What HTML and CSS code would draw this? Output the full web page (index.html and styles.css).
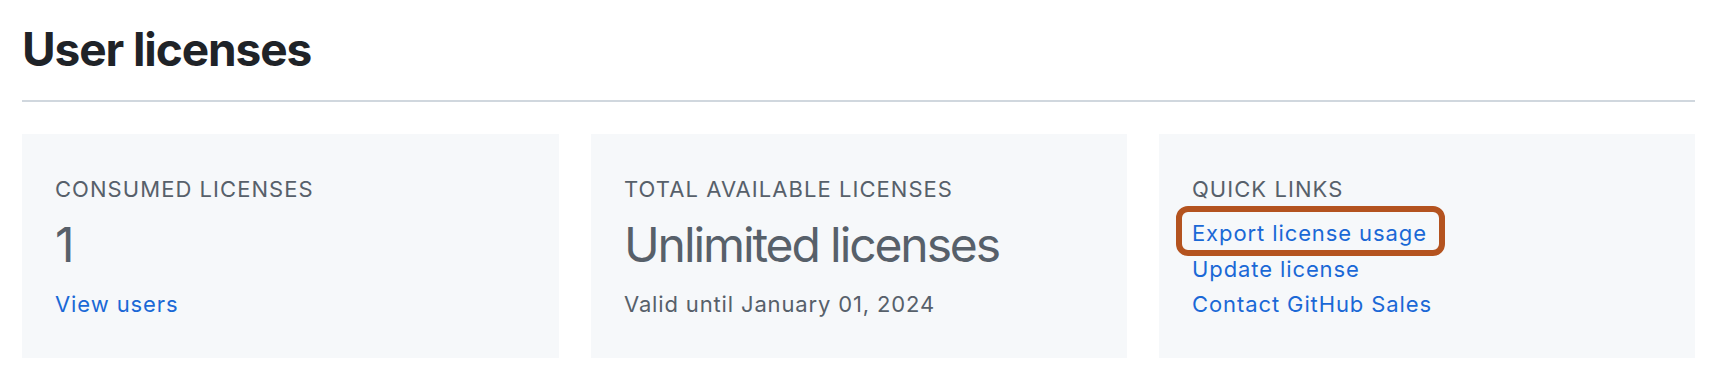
FILE: index.html
```html
<!DOCTYPE html>
<html lang="en">
<head>
<meta charset="utf-8">
<title>User licenses</title>
<link rel="stylesheet" href="styles.css">
</head>
<body>
<main class="page">
  <h1 class="page-title">User licenses</h1>
  <section class="cards">
    <div class="card">
      <div class="card-label">CONSUMED LICENSES</div>
      <div class="card-value">1</div>
      <a class="card-link" href="#">View users</a>
    </div>
    <div class="card">
      <div class="card-label">TOTAL AVAILABLE LICENSES</div>
      <div class="card-value">Unlimited licenses</div>
      <div class="card-note">Valid until January 01, 2024</div>
    </div>
    <div class="card">
      <div class="card-label">QUICK LINKS</div>
      <ul class="quick-links">
        <li><a class="card-link highlighted" href="#">Export license usage</a></li>
        <li><a class="card-link" href="#">Update license</a></li>
        <li><a class="card-link" href="#">Contact GitHub Sales</a></li>
      </ul>
    </div>
  </section>
</main>
</body>
</html>
```

FILE: styles.css
```css
* { box-sizing: border-box; }

html, body {
  margin: 0;
  padding: 0;
  background: #ffffff;
}

body {
  font-family: Inter, "Liberation Sans", Arial, sans-serif;
  color: #1f2328;
}

.page {
  width: 1673px;
  margin-left: 22px;
}

.page-title {
  margin: 0;
  padding: 21px 0 23px;
  font-size: 46px;
  line-height: 56px;
  font-weight: 700;
  letter-spacing: -1.1px;
  color: #1f2328;
  border-bottom: 2px solid #d0d7de;
}

.cards {
  display: grid;
  grid-template-columns: 537px 536px 536px;
  column-gap: 32px;
  margin-top: 32px;
}

.card {
  background: #f6f8fa;
  height: 224px;
  padding: 39px 33px 0;
}

.card-label {
  font-size: 22px;
  line-height: 32px;
  color: #57606a;
  letter-spacing: 1.05px;
}

.card-value {
  margin-top: 11px;
  font-size: 48px;
  line-height: 58px;
  color: #57606a;
  letter-spacing: -2.1px;
}

.card-note {
  margin-top: 14px;
  font-size: 22px;
  line-height: 32px;
  color: #57606a;
  letter-spacing: 0.85px;
}

.card > .card-link {
  display: block;
  margin-top: 14px;
}

.card-link {
  font-size: 22px;
  line-height: 32px;
  color: #1a68d6;
  text-decoration: none;
  letter-spacing: 0.9px;
}

.quick-links {
  list-style: none;
  margin: 11px 0 0;
  padding: 0;
}

.quick-links li {
  line-height: 35.7px;
  height: 35.7px;
}

.quick-links .card-link {
  line-height: 35.7px;
}

.highlighted {
  position: relative;
  display: inline-block;
}

.highlighted::after {
  content: "";
  position: absolute;
  top: -10px;
  bottom: -4px;
  left: -16px;
  right: -18px;
  border: 6px solid #b4531f;
  border-radius: 12px;
}
```
